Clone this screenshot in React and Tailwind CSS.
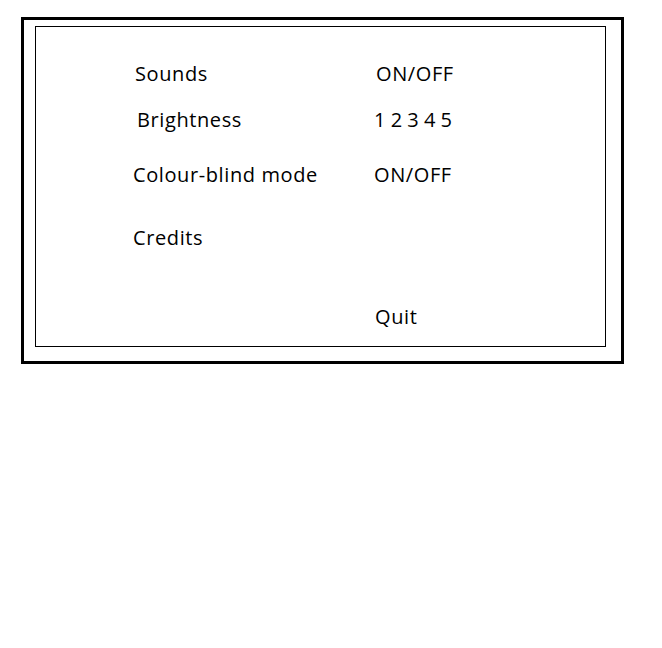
import React from 'react';

const rows = [
  { label: 'Sounds', value: 'ON/OFF', mt: 'mt-[35px]', lpad: 'pl-[2px]', vpad: 'pl-[2px]' },
  { label: 'Brightness', value: '1 2 3 4 5', mt: 'mt-[22px]', lpad: 'pl-[4px]', vpad: 'pl-0 tracking-normal' },
  { label: 'Colour-blind mode', value: 'ON/OFF', mt: 'mt-[31px]', lpad: 'pl-0', vpad: 'pl-0' },
  { label: 'Credits', value: '', mt: 'mt-[39px]', lpad: 'pl-0', vpad: 'pl-0' },
  { label: '', value: 'Quit', mt: 'mt-[55px]', lpad: 'pl-0', vpad: 'pl-[1px]' },
];

const App = () => {
  return (
    <div className="w-[662px] h-[648px] bg-white pt-[17px] pl-[21px]" style={{ fontFamily: '"Open Sans", sans-serif' }}>
      <div className="w-[603px] h-[347px] border-[3px] border-black pt-[6px] pl-[11px]">
        <div className="w-[571px] h-[321px] border border-black pl-[97px]">
          {rows.map((row, i) => (
            <div key={i} className={`flex h-[24px] text-[20px] leading-[24px] tracking-[0.6px] text-black ${row.mt}`}>
              <div className={`w-[241px] ${row.lpad}`}>{row.label}</div>
              <div className={row.vpad}>{row.value}</div>
            </div>
          ))}
        </div>
      </div>
    </div>
  );
};

export default App;
